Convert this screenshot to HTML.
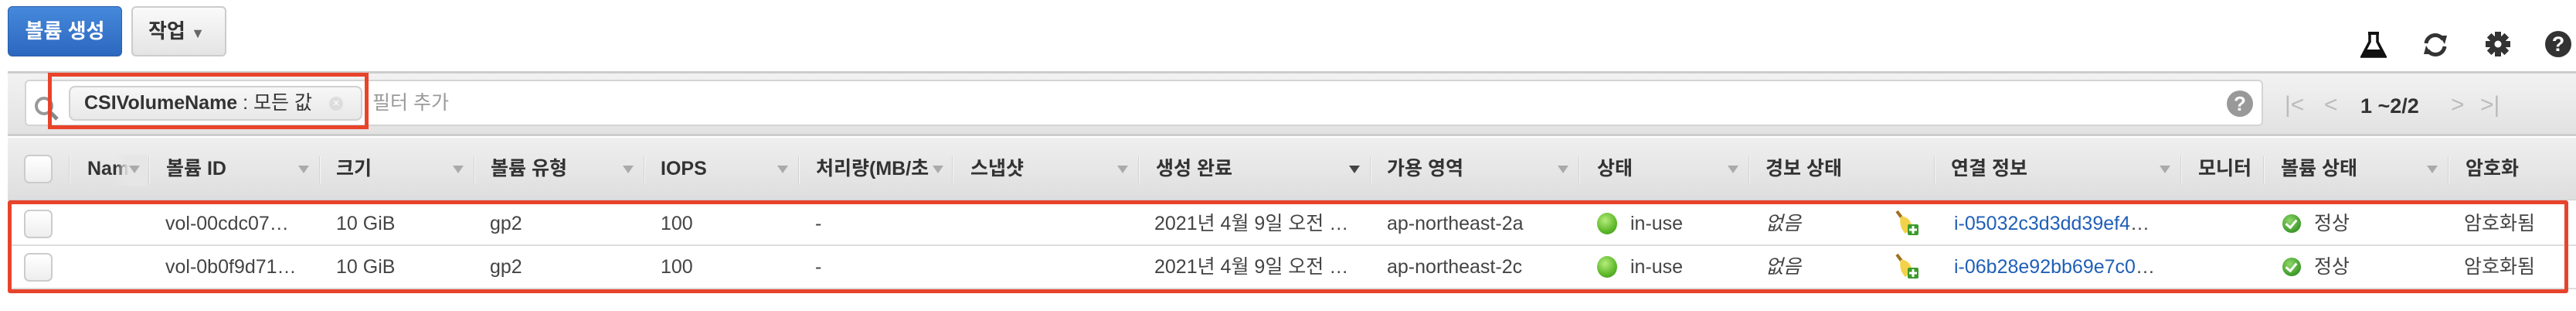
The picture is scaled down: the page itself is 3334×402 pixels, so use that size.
<!DOCTYPE html>
<html><head><meta charset="utf-8"><style>
*{margin:0;padding:0;box-sizing:border-box}
body{width:3334px;height:402px;background:#fff;position:relative;overflow:hidden;font-family:"Liberation Sans","Noto Sans CJK KR",sans-serif;color:#444}
.a{position:absolute;white-space:nowrap}
.hd{font-weight:bold;font-size:25px;color:#333;top:203px;line-height:30px}
.sep{position:absolute;top:202px;width:2px;height:35px;background:#d2d2d2;border-right:1px solid #f6f6f6}
.arr{position:absolute;top:214px;width:0;height:0;border-left:7px solid transparent;border-right:7px solid transparent;border-top:10px solid #aaa}
.cb{position:absolute;width:37px;height:37px;border:2px solid #ccc;border-radius:7px;background:linear-gradient(#fff,#eee)}
.td{font-size:25px;line-height:30px}
.r1{top:274px}.r2{top:330px}
.dot{position:absolute;width:26px;height:28px;border-radius:50%;background:radial-gradient(circle at 40% 35%,#b6ec7a,#5cb82a 60%,#3f8d1c)}
.chk{position:absolute;width:24px;height:24px;border-radius:50%;background:radial-gradient(circle at 40% 35%,#8fd86a,#3c9a2a 70%,#2d7a1f)}
.chk:after{content:"";position:absolute;left:7px;top:4px;width:6px;height:11px;border:solid #fff;border-width:0 3px 3px 0;transform:rotate(40deg)}
.lnk{color:#1f5fb8}
</style></head><body>
<!-- buttons -->
<div class="a" style="left:10px;top:8px;width:148px;height:65px;border-radius:6px;background:linear-gradient(#4589db,#2c67bf);border:1px solid #2a5ea8;color:#fff;font-weight:bold;font-size:26px;line-height:63px;text-align:center">볼륨 생성</div>
<div class="a" style="left:170px;top:8px;width:123px;height:65px;border-radius:6px;background:linear-gradient(#fafafa,#e4e4e4);border:2px solid #ccc;color:#333;font-weight:bold;font-size:26px;line-height:61px;padding-left:20px">작업 <span style="font-size:18px;color:#666">▼</span></div>
<!-- top icons -->
<svg class="a" style="left:3055px;top:40px" width="34" height="35" viewBox="0 0 34 35"><rect x="10" y="1" width="14" height="4" fill="#111"/><path d="M12 4v10L2 33h30L22 14V4" fill="none" stroke="#111" stroke-width="3.5"/><path d="M7 24h20l5 9H2z" fill="#111"/></svg>
<svg class="a" style="left:3130px;top:40px" width="44" height="36" viewBox="0 0 44 36"><path d="M10 16a12 12 0 0 1 22-5" fill="none" stroke="#333" stroke-width="5"/><path d="M27 6l10 0l-3 11z" fill="#333"/><path d="M34 20a12 12 0 0 1-22 5" fill="none" stroke="#333" stroke-width="5"/><path d="M17 30l-10 0l3-11z" fill="#333"/></svg>
<svg class="a" style="left:3216px;top:40px" width="34" height="34" viewBox="0 0 34 34"><g fill="#333"><circle cx="17" cy="17" r="11"/><rect x="13" y="1" width="8" height="32"/><rect x="1" y="13" width="32" height="8"/><rect x="13" y="1" width="8" height="32" transform="rotate(45 17 17)"/><rect x="13" y="1" width="8" height="32" transform="rotate(-45 17 17)"/></g><circle cx="17" cy="17" r="4.5" fill="#fff"/></svg>
<div class="a" style="left:3294px;top:40px;width:34px;height:34px;border-radius:50%;background:#333;color:#fff;font-weight:bold;font-size:27px;line-height:34px;text-align:center">?</div>
<!-- filter band -->
<div class="a" style="left:10px;top:92px;width:3324px;height:84px;background:linear-gradient(#f2f2f2,#e2e2e2);border-top:3px solid #ccc;border-bottom:3px solid #ccc"></div>
<div class="a" style="left:32px;top:103px;width:2897px;height:60px;background:#fff;border:2px solid #d4d4d4;border-radius:6px"></div>
<svg class="a" style="left:43px;top:123px" width="34" height="34" viewBox="0 0 34 34"><circle cx="14" cy="14" r="10" fill="none" stroke="#999" stroke-width="4"/><path d="M21 21l10 10" stroke="#888" stroke-width="5"/></svg>
<div class="a" style="left:89px;top:111px;width:380px;height:45px;border:2px solid #d0d0d0;border-radius:8px;background:linear-gradient(#f7f7f7,#e8e8e8);font-size:25px;line-height:41px;padding-left:18px;color:#333"><b>CSIVolumeName</b> : 모든 값</div>
<div class="a" style="left:426px;top:125px;width:18px;height:18px;border-radius:50%;background:#ddd;color:#fff;font-size:15px;line-height:18px;text-align:center">×</div>
<div class="a" style="left:62px;top:94px;width:415px;height:73px;border:5px solid #e8432b"></div>
<div class="a" style="left:482px;top:118px;font-size:25px;color:#999;line-height:30px">필터 추가</div>
<div class="a" style="left:2882px;top:117px;width:34px;height:34px;border-radius:50%;background:#999;color:#fff;font-weight:bold;font-size:26px;line-height:34px;text-align:center">?</div>
<div class="a" style="left:2957px;top:118px;font-size:30px;color:#bbb;line-height:36px">|&lt;</div>
<div class="a" style="left:3008px;top:118px;font-size:30px;color:#bbb;line-height:36px">&lt;</div>
<div class="a" style="left:3055px;top:120px;font-size:27px;font-weight:bold;color:#333;line-height:34px">1 ~2/2</div>
<div class="a" style="left:3172px;top:118px;font-size:30px;color:#bbb;line-height:36px">&gt;</div>
<div class="a" style="left:3210px;top:118px;font-size:30px;color:#bbb;line-height:36px">&gt;|</div>
<!-- header -->
<div class="a" style="left:10px;top:178px;width:3324px;height:81px;background:linear-gradient(#efefef,#dedede);border-bottom:1px solid #ccc"></div>
<div class="cb" style="left:31px;top:200px"></div>
<div class="sep" style="left:89px"></div><div class="sep" style="left:192px"></div><div class="sep" style="left:413px"></div><div class="sep" style="left:613px"></div><div class="sep" style="left:833px"></div><div class="sep" style="left:1033px"></div><div class="sep" style="left:1232px"></div><div class="sep" style="left:1473px"></div><div class="sep" style="left:1773px"></div><div class="sep" style="left:2043px"></div><div class="sep" style="left:2263px"></div><div class="sep" style="left:2503px"></div><div class="sep" style="left:2822px"></div><div class="sep" style="left:2929px"></div><div class="sep" style="left:3168px"></div>
<div class="a hd" style="left:113px">Nam</div><div class="a" style="left:150px;top:200px;width:40px;height:40px;background:linear-gradient(90deg,rgba(232,232,232,0),#e6e6e6 40%)"></div><div class="arr" style="left:167px"></div>
<div class="a hd" style="left:215px">볼륨 ID</div><div class="arr" style="left:386px"></div>
<div class="a hd" style="left:435px">크기</div><div class="arr" style="left:586px"></div>
<div class="a hd" style="left:635px">볼륨 유형</div><div class="arr" style="left:806px"></div>
<div class="a hd" style="left:855px">IOPS</div><div class="arr" style="left:1006px"></div>
<div class="a hd" style="left:1056px;width:155px;overflow:hidden">처리량(MB/초</div><div class="arr" style="left:1207px"></div>
<div class="a hd" style="left:1256px">스냅샷</div><div class="arr" style="left:1446px"></div>
<div class="a hd" style="left:1496px">생성 완료</div><div class="arr" style="left:1746px;border-top-color:#444"></div>
<div class="a hd" style="left:1795px">가용 영역</div><div class="arr" style="left:2016px"></div>
<div class="a hd" style="left:2067px">상태</div><div class="arr" style="left:2236px"></div>
<div class="a hd" style="left:2285px">경보 상태</div>
<div class="a hd" style="left:2525px">연결 정보</div><div class="arr" style="left:2795px"></div>
<div class="a hd" style="left:2845px;width:72px;overflow:hidden">모니터</div>
<div class="a hd" style="left:2952px">볼륨 상태</div><div class="arr" style="left:3141px"></div>
<div class="a hd" style="left:3191px">암호화</div>
<!-- rows -->
<div class="a" style="left:10px;top:316px;width:3324px;height:2px;background:#ddd"></div>
<div class="a" style="left:10px;top:372px;width:3324px;height:2px;background:#ddd"></div>
<div class="cb" style="left:31px;top:271px"></div><div class="cb" style="left:31px;top:327px"></div>
<div class="a td r1" style="left:214px">vol-00cdc07…</div><div class="a td r2" style="left:214px">vol-0b0f9d71…</div>
<div class="a td r1" style="left:435px">10 GiB</div><div class="a td r2" style="left:435px">10 GiB</div>
<div class="a td r1" style="left:634px">gp2</div><div class="a td r2" style="left:634px">gp2</div>
<div class="a td r1" style="left:855px">100</div><div class="a td r2" style="left:855px">100</div>
<div class="a td r1" style="left:1055px">-</div><div class="a td r2" style="left:1055px">-</div>
<div class="a td r1" style="left:1494px">2021년 4월 9일 오전 …</div><div class="a td r2" style="left:1494px">2021년 4월 9일 오전 …</div>
<div class="a td r1" style="left:1795px">ap-northeast-2a</div><div class="a td r2" style="left:1795px">ap-northeast-2c</div>
<div class="dot" style="left:2067px;top:275px"></div><div class="dot" style="left:2067px;top:331px"></div>
<div class="a td r1" style="left:2110px">in-use</div><div class="a td r2" style="left:2110px">in-use</div>
<div class="a td r1" style="left:2285px;font-style:italic">없음</div><div class="a td r2" style="left:2285px;font-style:italic">없음</div>
<svg class="a" style="left:2453px;top:272px" width="32" height="32" viewBox="0 0 32 32"><path d="M2 1l6 8" stroke="#a07020" stroke-width="4"/><path d="M7 8c6-2 16 6 14 16l-8 6c-6-6-8-14-6-22z" fill="#f3d24a"/><rect x="16" y="18" width="14" height="14" rx="2" fill="#3a9a2a"/><path d="M23 20v10M18 25h10" stroke="#fff" stroke-width="3"/></svg>
<svg class="a" style="left:2453px;top:328px" width="32" height="32" viewBox="0 0 32 32"><path d="M2 1l6 8" stroke="#a07020" stroke-width="4"/><path d="M7 8c6-2 16 6 14 16l-8 6c-6-6-8-14-6-22z" fill="#f3d24a"/><rect x="16" y="18" width="14" height="14" rx="2" fill="#3a9a2a"/><path d="M23 20v10M18 25h10" stroke="#fff" stroke-width="3"/></svg>
<div class="a td r1 lnk" style="left:2529px">i-05032c3d3dd39ef4<span style="color:#444">…</span></div><div class="a td r2 lnk" style="left:2529px">i-06b28e92bb69e7c0<span style="color:#444">…</span></div>
<div class="chk" style="left:2954px;top:277px"></div><div class="chk" style="left:2954px;top:333px"></div>
<div class="a td r1" style="left:2995px">정상</div><div class="a td r2" style="left:2995px">정상</div>
<div class="a td r1" style="left:3189px">암호화됨</div><div class="a td r2" style="left:3189px">암호화됨</div>
<div class="a" style="left:10px;top:259px;width:3314px;height:120px;border:5px solid #e8432b;border-radius:3px"></div>
</body></html>
